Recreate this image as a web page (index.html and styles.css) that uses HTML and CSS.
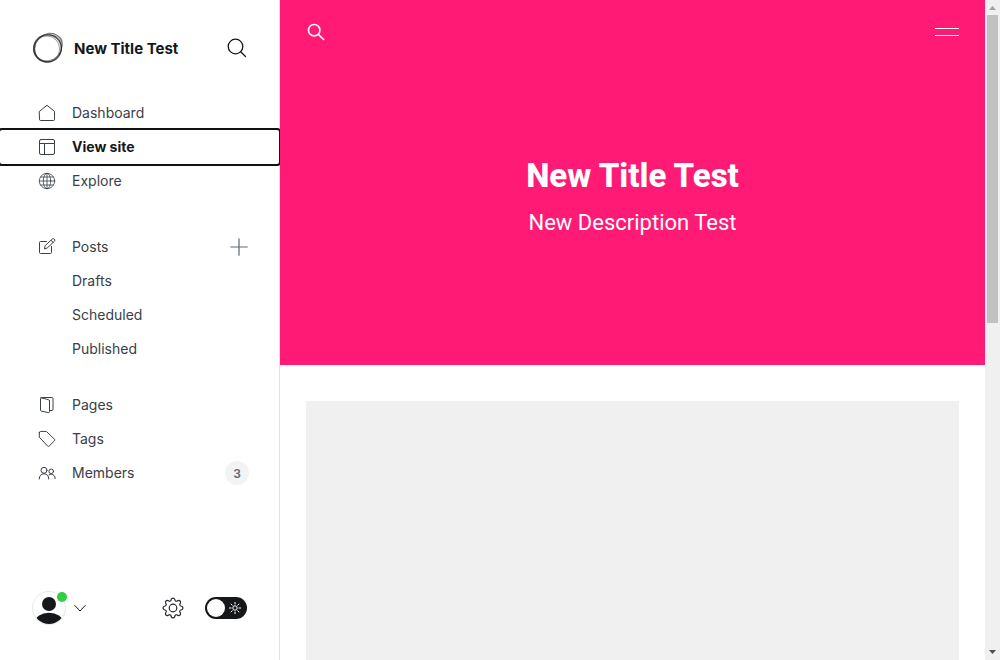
FILE: index.html
```html
<!DOCTYPE html>
<html lang="en">
<head>
<meta charset="utf-8">
<meta name="viewport" content="width=device-width, initial-scale=1">
<title>New Title Test</title>
<link rel="stylesheet" href="styles.css">
</head>
<body>
<div class="app">
  <aside class="sidebar">
    <header class="brand">
      <svg class="logo" viewBox="0 0 32 32" fill="none" stroke="#15171a" aria-hidden="true">
        <path d="M16 1.500C22 .5 30 4 30.800 9 31 20 27 30 16 30.500 6 31 .5 24 1 15.500 1.500 8 7 3 13 2.500c7-.5 13.500 3 15.500 9.500 1 9-3 16.500-11.500 17.500C9 30 3 23 3 16 3 8 8 4 16 1.500z" fill="#15171a" fill-rule="evenodd" stroke="none" opacity=".28"/>
        <ellipse cx="15.500" cy="16.500" rx="13.800" ry="13.600" stroke-width="1.200" opacity=".65"/>
        <ellipse cx="15.500" cy="16" rx="14.300" ry="13.300" stroke-width=".8" opacity=".6" transform="rotate(-35 16 16)"/>
        <ellipse cx="17" cy="15.700" rx="14.800" ry="12.800" stroke-width=".8" opacity=".6" transform="rotate(-48 16 16)"/>
        <ellipse cx="15" cy="17" rx="12.600" ry="13" stroke-width=".8" opacity=".5"/>
      </svg>
      <span class="brand-name">New Title Test</span>
      <button class="icon-button search" aria-label="Search">
        <svg width="20" height="20" viewBox="0 0 20 20" fill="none" stroke="#15171a" stroke-width="1.300" stroke-linecap="round"><circle cx="8.500" cy="8.500" r="7.300"/><path d="M13.700 13.700 18.500 18.500"/></svg>
      </button>
    </header>
    <nav class="nav">
      <ul class="group group-main">
        <li><a class="item" href="#dashboard"><svg class="icon" viewBox="0 0 18 18"><path d="M1.500 7.300 9 1.300l7.500 6v8.200a1 1 0 0 1-1 1h-13a1 1 0 0 1-1-1z"/></svg>Dashboard</a></li>
        <li><a class="item current" href="#site" aria-current="page"><svg class="icon" viewBox="0 0 18 18"><rect x="1.500" y="1.500" width="15" height="15" rx="1.500"/><path d="M1.500 5.500h15M6.500 5.500v11"/></svg>View site</a></li>
        <li><a class="item" href="#explore"><svg class="icon thin" viewBox="0 0 18 18"><circle cx="9" cy="9" r="7.700"/><ellipse cx="9" cy="9" rx="3.700" ry="7.700"/><path d="M9 1.300v15.400M1.300 9h15.400M2.700 5h12.600M2.700 13h12.600"/></svg>Explore</a></li>
      </ul>
      <ul class="group group-posts">
        <li class="split"><a class="item" href="#posts"><svg class="icon" viewBox="0 0 18 18"><path d="M8.500 3.500h-6a1 1 0 0 0-1 1v10a1 1 0 0 0 1 1h10a1 1 0 0 0 1-1V8.500"/><path d="m6.500 10.500.7-2.900 7-6.500a1.300 1.300 0 0 1 2.200 2.200l-7 6.500zM13 2.300l2.200 2.200"/></svg>Posts</a>
          <button class="icon-button add" aria-label="New post"><svg width="18" height="18" viewBox="0 0 18 18" stroke="#5d6670" stroke-width="1.200" stroke-linecap="round"><path d="M9 .8v16.400M.8 9h16.400"/></svg></button></li>
        <li><a class="item sub" href="#drafts">Drafts</a></li>
        <li><a class="item sub" href="#scheduled">Scheduled</a></li>
        <li><a class="item sub" href="#published">Published</a></li>
      </ul>
      <ul class="group">
        <li><a class="item" href="#pages"><svg class="icon" viewBox="0 0 18 18"><path d="M11.500 14.500v1.300a.8.800 0 0 1-1 .8l-7.300-1.500a1 1 0 0 1-.7-1V2.500a1 1 0 0 1 1-1h10.500a1 1 0 0 1 1 1v11a1 1 0 0 1-1 1h-2.500V5a1.500 1.500 0 0 0-1.200-1.400L3 1.800M11.500 14.500V5"/></svg>Pages</a></li>
        <li><a class="item" href="#tags"><svg class="icon" viewBox="0 0 18 18"><path d="M1.300 2.800v4.400l8.400 8.900a1 1 0 0 0 1.400 0l5.500-5.400a1 1 0 0 0 0-1.400L8.700 1.700a1 1 0 0 0-.7-.3H2.700a1.400 1.400 0 0 0-1.400 1.400z"/></svg>Tags</a></li>
        <li class="split"><a class="item" href="#members"><svg class="icon" viewBox="0 0 18 18"><circle cx="6" cy="6.300" r="3"/><circle cx="13.200" cy="7.300" r="2.300"/><path d="M1.200 15c0-3.200 2-5.200 4.800-5.200s4.800 2 4.800 5.200M11 10.900c.7-.5 1.400-.7 2.200-.7 2.300 0 3.900 1.800 4 4.400"/></svg>Members</a><span class="count">3</span></li>
      </ul>
    </nav>
    <footer class="tools">
      <button class="user" aria-label="User menu">
        <svg width="35" height="35" viewBox="0 0 35 35"><clipPath id="face"><circle cx="17" cy="17" r="16"/></clipPath><circle cx="17" cy="17" r="16.500" fill="#fff" stroke="#e6e8ea"/><g clip-path="url(#face)" fill="#15171a"><circle cx="17" cy="13" r="7"/><ellipse cx="17" cy="31" rx="14" ry="9.300"/></g><circle cx="30" cy="6" r="5" fill="#30cf43"/></svg>
        <svg width="12" height="8" viewBox="0 0 12 8" fill="none" stroke="#15171a" stroke-width="1" stroke-linecap="round" stroke-linejoin="round"><path d="m.8 1.500 5.200 5.500L11.200 1.500"/></svg>
      </button>
      <button class="icon-button settings" aria-label="Settings">
        <svg width="22" height="22" viewBox="0 0 22 22" fill="none" stroke="#252a30" stroke-width="1.200" stroke-linejoin="round"><circle cx="11" cy="11" r="3.800"/><path d="M9.300 2.200c.5-1.500 2.900-1.500 3.400 0l.3 1c.3.900 1.300 1.300 2.100.9l.9-.5c1.500-.7 3.100.9 2.400 2.400l-.5.900c-.4.800 0 1.800.9 2.100l1 .3c1.500.5 1.500 2.900 0 3.400l-1 .3c-.9.300-1.300 1.300-.9 2.100l.5.900c.7 1.500-.9 3.100-2.400 2.400l-.9-.5c-.8-.4-1.800 0-2.100.9l-.3 1c-.5 1.500-2.900 1.500-3.400 0l-.3-1c-.3-.9-1.300-1.300-2.100-.9l-.9.500c-1.500.7-3.100-.9-2.400-2.400l.5-.9c.4-.8 0-1.800-.9-2.100l-1-.3c-1.500-.5-1.500-2.900 0-3.400l1-.3c.9-.3 1.300-1.300.9-2.100L3.600 6C2.900 4.500 4.500 2.900 6 3.600l.9.500c.8.400 1.800 0 2.100-.9z"/></svg>
      </button>
      <label class="toggle">
        <input type="checkbox" role="switch" aria-label="Night mode">
        <span class="knob"></span>
        <svg width="12" height="12" viewBox="0 0 12 12" fill="none" stroke="#fff" stroke-width="1"><circle cx="6" cy="6" r="2.200"/><path d="M6 0v2.500M6 9.500V12M0 6h2.500M9.500 6H12M1.800 1.800l1.700 1.700M8.500 8.500l1.700 1.700M10.200 1.800 8.500 3.500M3.500 8.500l-1.700 1.700"/></svg>
      </label>
    </footer>
  </aside>
  <main class="preview">
    <div class="site">
      <section class="hero">
        <div class="hero-bar">
          <button class="icon-button" aria-label="Search site"><svg width="20" height="20" viewBox="0 0 20 20" fill="none" stroke="#fff" stroke-width="1.600"><circle cx="8.200" cy="8.200" r="5.700"/><path d="m12.300 12.300 5.900 5.700"/></svg></button>
          <button class="icon-button burger" aria-label="Menu"></button>
        </div>
        <div class="hero-text">
          <h1>New Title Test</h1>
          <p>New Description Test</p>
        </div>
      </section>
      <div class="feed"><div class="placeholder"></div></div>
    </div>
    <div class="scrollbar" aria-hidden="true">
      <svg width="15" height="15" viewBox="0 0 15 15"><path d="M4 10h7L7.500 6z" fill="#a3a3a3"/></svg>
      <div class="thumb"></div>
      <svg width="15" height="15" viewBox="0 0 15 15"><path d="M4 5h7L7.500 9z" fill="#505050"/></svg>
    </div>
  </main>
</div>
</body>
</html>
```
FILE: styles.css
```css
* { box-sizing: border-box; }
body { margin: 0; font-family: Inter, "Liberation Sans", sans-serif; color: #15171a; background: #fff; }
button { padding: 0; border: 0; background: none; font: inherit; cursor: pointer; }
svg { display: block; flex: none; }
ul { list-style: none; margin: 0; padding: 0; }
.app { display: flex; height: 100vh; }

.sidebar { display: flex; flex-direction: column; flex: 0 0 280px; border-right: 1px solid #e2e5e8; }
.brand { display: flex; align-items: center; height: 96px; padding: 0 32px; }
.logo { width: 32px; height: 32px; }
.brand-name { margin-left: 10px; font-size: 15px; line-height: 17px; font-weight: 700; }
.icon-button { display: flex; align-items: center; justify-content: center; }
.search { margin-left: auto; }

.nav { display: flex; flex-direction: column; flex: 1; }
.group-main { margin-bottom: 32px; }
.group-posts { margin-bottom: 22px; }
.item { display: flex; align-items: center; gap: 16px; height: 34px; padding-left: 38px; font-size: 14px; line-height: 18px; color: #394047; text-decoration: none; }
.sub { padding-left: 72px; }
.current { font-weight: 700; color: #15171a; border-radius: 2px; outline: 2px solid #101114; }
.icon { width: 18px; height: 18px; fill: none; stroke: #394047; stroke-width: 1; stroke-linejoin: round; stroke-linecap: round; }
.thin { stroke-width: .8; }
.split { display: flex; align-items: center; justify-content: space-between; padding-right: 30px; }
.split .item { flex: 1; }
.add { width: 20px; height: 20px; }
.count { display: grid; place-items: center; width: 24px; height: 24px; border-radius: 50%; background: #f1f3f4; color: #5d6670; font-size: 12px; font-weight: 600; }

.tools { display: flex; align-items: center; height: 104px; padding: 0 32px; }
.user { display: flex; align-items: center; gap: 7px; }
.settings { margin-left: auto; }
.toggle { position: relative; display: flex; align-items: center; justify-content: space-between; width: 42px; height: 22px; margin-left: 21px; padding: 0 6px 0 2px; border-radius: 11px; background: #15171a; }
.toggle input { position: absolute; inset: 0; width: 100%; height: 100%; margin: 0; opacity: 0; }
.knob { width: 18px; height: 18px; border-radius: 50%; background: #fff; }

.preview { position: relative; display: flex; flex: 1; min-width: 0; background: #fff; }
.site { flex: 1; min-width: 0; overflow: hidden; font-family: Roboto, "Liberation Sans", sans-serif; }
.hero { height: 365px; background: #ff1a75; color: #fff; }
.hero-bar { display: flex; align-items: center; justify-content: space-between; height: 64px; padding: 0 26px; }
.burger { width: 24px; height: 8px; border: solid #fff; border-width: 1px 0; }
.hero-text { padding-top: 92px; text-align: center; }
.hero h1 { margin: 0; font-size: 33px; line-height: 40px; font-weight: 800; }
.hero p { margin: 10px 0 0; font-size: 22px; line-height: 34px; }
.feed { padding: 36px 26px; }
.placeholder { height: 435px; background: #f0f0f0; }
.scrollbar { display: flex; flex-direction: column; width: 15px; background: #f0f0f0; }
.scrollbar svg:last-child { margin-top: auto; }
.thumb { flex: 0 1 308px; margin: 0 2px; background: #c1c1c1; }
```
